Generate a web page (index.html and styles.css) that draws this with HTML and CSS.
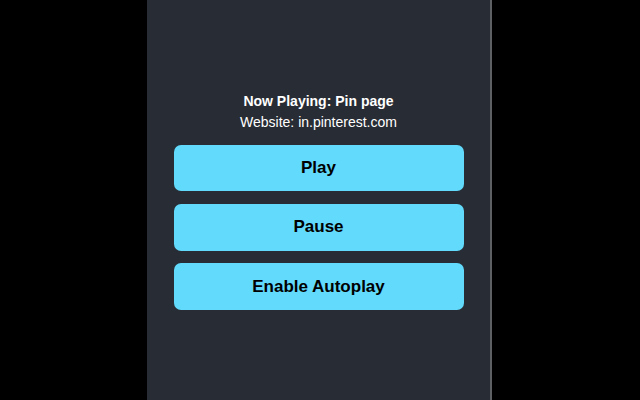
FILE: index.html
```html
<!DOCTYPE html>
<html>
<head>
<meta charset="utf-8">
<link rel="stylesheet" href="styles.css">
</head>
<body>
<div class="stage">
  <div class="panel">
    <p class="now">Now Playing: Pin page</p>
    <p class="site">Website: in.pinterest.com</p>
    <button class="btn">Play</button>
    <button class="btn">Pause</button>
    <button class="btn">Enable Autoplay</button>
  </div>
  <div class="edge"></div>
</div>
</body>
</html>
```
FILE: styles.css
```css
html, body {
  margin: 0;
  padding: 0;
  background: #000;
  height: 100%;
}
.stage {
  display: flex;
  height: 400px;
  padding-left: 147px;
}
.panel {
  width: 343px;
  height: 400px;
  background: #282c34;
  display: flex;
  flex-direction: column;
  align-items: center;
  padding-top: 91px;
  box-sizing: border-box;
  font-family: "Liberation Sans", Arial, sans-serif;
  color: #fff;
}
.edge {
  width: 2px;
  height: 400px;
  background: #5e6064;
}
.now {
  margin: 0;
  font-size: 14px;
  font-weight: bold;
  line-height: 21px;
}
.site {
  margin: 0 0 11.5px;
  font-size: 14px;
  line-height: 21px;
}
.btn {
  width: 290px;
  height: 46.7px;
  margin: 0 0 12.8px;
  border: none;
  border-radius: 7px;
  background: #61dafb;
  color: #000;
  font-family: "Liberation Sans", Arial, sans-serif;
  font-size: 17px;
  font-weight: bold;
  padding: 0;
  cursor: pointer;
}
```
